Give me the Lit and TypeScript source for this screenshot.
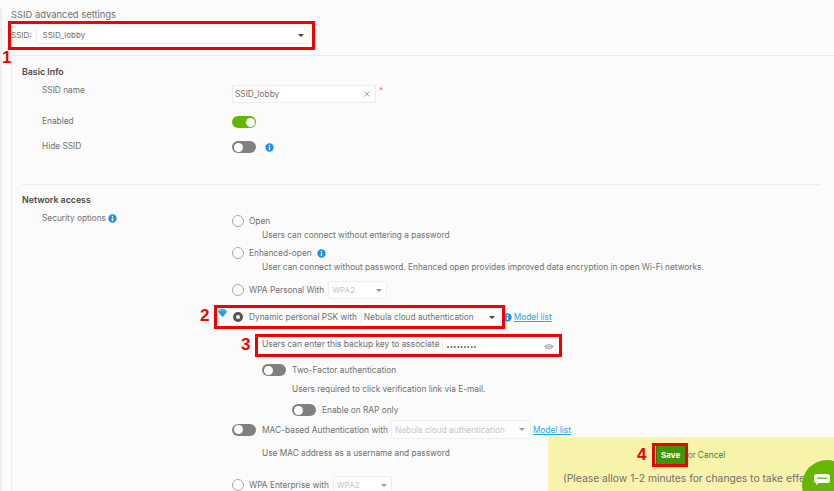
import { LitElement, html, css } from "lit";
import { customElement } from "lit/decorators.js";

const info = () => html`<svg class="info" viewBox="0 0 10 10"><circle cx="5" cy="5" r="4.6" fill="#1a8fef"/><rect x="4.2" y="4.2" width="1.6" height="3.6" fill="#fff"/><rect x="4.2" y="2.1" width="1.6" height="1.4" fill="#fff"/></svg>`;
const caret = (dark = false) => html`<svg class="caret" viewBox="0 0 8 4"><path d="M0 0H8L4 4Z" fill=${dark ? "#444" : "#999"}/></svg>`;
const toggle = (on = false) => html`<span class="toggle ${on ? "on" : ""}"><span class="knob"></span></span>`;
const radio = (on = false) => on ? html`<span class="radio on"></span>` : html`<span class="radio"></span>`;

@customElement("app-root")
export class AppRoot extends LitElement {
  static styles = css`
    :host { display: block; position: relative; width: 834px; height: 491px; overflow: hidden; background: #fafbfa;
      font-family: Inter, "Open Sans", sans-serif; font-size: 8.3px; color: #707070; }
    * { box-sizing: border-box; }
    .page { height: 491px; padding-left: 2px; border-left: 2px solid #efefef; margin: 0; }
    .title { height: 12px; margin: 9px 0 0 7px; font-size: 9.4px; line-height: 12px; }
    .ssid { display: flex; align-items: center; height: 18px; margin: 5px 0 0 7px; font-size: 8px; gap: 4px; }
    .select { display: flex; align-items: center; justify-content: space-between; background: #fff; border: 1px solid #eeeeee; border-radius: 2px; white-space: nowrap; }
    .select.main { width: 274px; height: 18px; padding: 0 5px 0 6px; }
    .caret { width: 6px; height: 3px; flex: none; }
    .card { margin: 11px 0 0 7px; border: 1px solid #ebebeb; border-right: 0; border-bottom: 0; height: 460px; padding: 0 14px 0 10px; }
    h3 { margin: 0; font-size: 8.8px; line-height: 12px; font-weight: 600; color: #4a4a4a; }
    .h-basic { margin-top: 10px; }
    .form { display: grid; grid-template-columns: 210px 1fr; }
    .label { padding-left: 20px; line-height: 12px; }
    .ctl { display: flex; align-items: center; gap: 9px; }
    .r-name { height: 17px; margin-top: 7px; }
    .r-name .label, .r-enabled .label, .r-hide .label { margin-top: -1px; }
    .r-enabled { height: 12px; margin-top: 14px; }
    .r-hide { height: 12px; margin-top: 13px; }
    .input { width: 144px; height: 18px; background: #fff; border: 1px solid #ececec; display: flex; align-items: center; justify-content: space-between; padding: 0 5px 0 2px; }
    .ctl.name { gap: 3px; align-items: flex-start; }
    .req { color: #f06a6a; font-size: 8px; line-height: 10px; }
    .x { width: 6px; height: 6px; }
    .toggle { position: relative; display: inline-block; width: 24px; height: 12px; border-radius: 6px; background: #808080; flex: none; }
    .toggle.on { background: #62b800; }
    .knob { position: absolute; top: 1.5px; left: 1.5px; width: 9px; height: 9px; border-radius: 50%; background: #fff; }
    .on > .knob { left: 13.5px; }
    .info { width: 9px; height: 9px; flex: none; }
    hr { border: 0; border-top: 1px solid #ececec; margin: 31px 0 0; }
    .h-net { margin-top: 9px; }
    .sec { margin-top: 6px; }
    .sec .label { display: flex; align-items: center; gap: 2px; height: 12px; }
    .radio { width: 12px; height: 12px; border-radius: 50%; border: 1px solid #a8a8a8; background: #fff; flex: none; }
    .radio.on { width: 10px; height: 10px; border: 3px solid #555; margin: 0 1px 0 1px; }
    .opt { display: flex; align-items: center; gap: 5px; white-space: nowrap; }
    .stack { display: flex; flex-direction: column; }
    .o-open { height: 14px; margin-top: 2px; }
    .d { height: 14px; display: flex; align-items: center; white-space: nowrap; }
    .d1 { padding-left: 30px; }
    .o-enh { height: 14px; margin-top: 4px; }
    .o-wpa { height: 18px; margin-top: 7px; }
    .o-dyn { height: 18px; margin-top: 9px; }
    .sel-wpa { width: 59px; height: 18px; margin-left: -1px; padding: 0 4px 0 3px; color: #c4c4c4; font-size: 8px; }
    .sel-dyn { width: 140px; height: 18px; padding: 0 5px 0 2px; margin-left: -1px; color: #707070; }
    .after { display: flex; align-items: center; gap: 2px; margin-left: -3px; }
    a { color: #1ea7ea; text-decoration: underline; }
    .o-key { height: 20px; margin-top: 10px; padding-left: 30px; gap: 3px; align-items: flex-start; font-size: 8.4px; }
    .o-key > span { padding-top: 3px; }
    .key { width: 114px; height: 20px; padding: 0 1px 0 3px; color: #444; font-size: 6px; }
    .o-tf { height: 12px; margin-top: 8px; padding-left: 30px; gap: 6px; font-size: 8.4px; }
    .d2 { padding-left: 60px; margin-top: 6px; }
    .o-rap { height: 12px; margin-top: 8px; padding-left: 60px; gap: 6px; }
    .o-mac { height: 19px; margin-top: 4px; gap: 6px; font-size: 8.4px; }
    .sel-mac { width: 140px; height: 19px; margin-left: -3px; padding: 0 5px 0 3px; color: #c4c4c4; font-size: 8.3px; }
    .after2 { margin-left: -4px; font-size: 8.3px; }
    .d3 { padding-left: 30px; margin-top: 7px; }
    .o-ent { height: 18px; margin-top: 16px; }
    .panel { position: absolute; left: 548px; top: 437px; width: 286px; height: 54px; background: #f7f3aa; border-radius: 3px 0 0 0; padding: 7px 0 0 15px; }
    .save-row { display: flex; align-items: center; justify-content: center; height: 22px; margin-left: -15px; gap: 2px; font-size: 8.4px; padding-right: 1px; }
    .save { width: 30px; height: 20px; background: #3f9600; border: 1px solid #2f7a00; color: #fff; font-weight: 700; font-size: 8px; display: flex; align-items: center; justify-content: center; }
    .cancel { color: #3d8a2c; }
    .wait { margin-top: 6px; font-size: 10.3px; line-height: 12px; white-space: nowrap; }
    .chat { position: absolute; left: 802px; top: 460px; width: 50px; height: 50px; border-radius: 50%; background: #64b900; }
    .chat svg { position: absolute; left: 12px; top: 14px; width: 16px; height: 11px; }
    .box { position: absolute; border: 3px solid #f00000; pointer-events: none; }
    .b1 { left: 8px; top: 21px; width: 307px; height: 29px; }
    .b2 { left: 214px; top: 305px; width: 291px; height: 24px; }
    .b3 { left: 255px; top: 334px; width: 307px; height: 23px; }
    .b4 { left: 652px; top: 443px; width: 36px; height: 24px; }
    .num { position: absolute; color: #ee0000; font-family: "Liberation Sans", sans-serif; font-weight: 700; font-size: 17px; line-height: 18px; }
    .n1 { left: 2px; top: 49px; }
    .n2 { left: 200px; top: 307px; }
    .n3 { left: 241px; top: 336px; }
    .n4 { left: 637px; top: 446px; }
    .gem { position: absolute; left: 218px; top: 309px; width: 9px; height: 8px; }
    .eye { width: 10px; height: 7px; }
  `;

  render() {
    return html`
      <div class="page">
        <div class="title">SSID advanced settings</div>
        <div class="ssid"><span>SSID:</span>
          <div class="select main"><span>SSID_lobby</span>${caret(true)}</div>
        </div>
        <div class="card">
          <h3 class="h-basic">Basic Info</h3>
          <div class="form r-name">
            <div class="label">SSID name</div>
            <div class="ctl name">
              <div class="input"><span>SSID_lobby</span>
                <svg class="x" viewBox="0 0 6 6"><path d="M.5.5 5.5 5.500M5.500.5.5 5.500" stroke="#999" stroke-width=".9"/></svg>
              </div><span class="req">*</span>
            </div>
          </div>
          <div class="form r-enabled"><div class="label">Enabled</div><div class="ctl">${toggle(true)}</div></div>
          <div class="form r-hide"><div class="label">Hide SSID</div><div class="ctl">${toggle()}${info()}</div></div>
          <hr />
          <h3 class="h-net">Network access</h3>
          <div class="form sec">
            <div class="label">Security options ${info()}</div>
            <div class="stack">
              <div class="opt o-open">${radio()}<span>Open</span></div>
              <div class="d d1">Users can connect without entering a password</div>
              <div class="opt o-enh">${radio()}<span>Enhanced-open</span>${info()}</div>
              <div class="d d1">User can connect without password. Enhanced open provides improved data encryption in open Wi-Fi networks.</div>
              <div class="opt o-wpa">${radio()}<span>WPA Personal With</span>
                <div class="select sel-wpa"><span>WPA2</span>${caret()}</div></div>
              <div class="opt o-dyn">${radio(true)}<span>Dynamic personal PSK with</span>
                <div class="select sel-dyn"><span>Nebula cloud authentication</span>${caret(true)}</div>
                <span class="after">${info()}<a>Model list</a></span></div>
              <div class="opt o-key"><span>Users can enter this backup key to associate</span>
                <div class="select key"><span>•••••••••</span>
                  <svg class="eye" viewBox="0 0 10 7"><path d="M0 3.500C2.500 0 7.500 0 10 3.500 7.500 7 2.500 7 0 3.500Z" fill="#b5b5b5"/><circle cx="5" cy="3.500" r="1.700" fill="#fff"/><circle cx="5" cy="3.500" r="1" fill="#999"/></svg>
                </div></div>
              <div class="opt o-tf">${toggle()}<span>Two-Factor authentication</span></div>
              <div class="d d2">Users required to click verification link via E-mail.</div>
              <div class="opt o-rap">${toggle()}<span>Enable on RAP only</span></div>
              <div class="opt o-mac">${toggle()}<span>MAC-based Authentication with</span>
                <div class="select sel-mac"><span>Nebula cloud authentication</span>${caret()}</div>
                <a class="after2">Model list</a></div>
              <div class="d d3">Use MAC address as a username and password</div>
              <div class="opt o-ent">${radio()}<span>WPA Enterprise with</span>
                <div class="select sel-wpa"><span>WPA2</span>${caret()}</div></div>
            </div>
          </div>
        </div>
      </div>

      <div class="panel">
        <div class="save-row"><span class="save">Save</span><span>or</span> <span class="cancel">Cancel</span></div>
        <div class="wait">(Please allow 1-2 minutes for changes to take effect)</div>
      </div>
      <div class="chat">
        <svg viewBox="0 0 16 11"><path d="M2.500 0h11A2.500 2.500 0 0 1 16 2.500v4A2.500 2.500 0 0 1 13.500 9H5L2 11V9A2.500 2.500 0 0 1 0 6.500v-4A2.500 2.500 0 0 1 2.500 0Z" fill="#fff"/><rect x="3" y="3.500" width="10" height="1.300" fill="#64b900"/></svg>
      </div>

      <svg class="gem" viewBox="0 0 9 8"><path d="M2 0h5l2 2.500L4.500 8 0 2.500Z" fill="#3fb4ee"/><path d="M0 2.500h9L4.500 8Z" fill="#1e9ce0"/></svg>
      <div class="box b1"></div><div class="box b2"></div><div class="box b3"></div><div class="box b4"></div>
      <span class="num n1">1</span><span class="num n2">2</span><span class="num n3">3</span><span class="num n4">4</span>
    `;
  }
}
